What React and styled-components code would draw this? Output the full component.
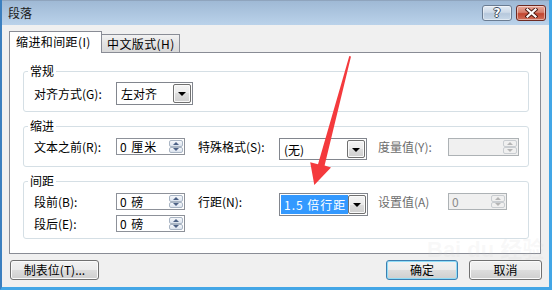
import React from 'react';
import styled, { createGlobalStyle } from 'styled-components';

const GlobalStyle = createGlobalStyle`
  body {
    margin: 0;
    font-family: "Noto Sans CJK SC", "Liberation Sans", sans-serif;
    font-size: 12px;
    color: #000;
  }
`;

const Window = styled.div`
  position: relative;
  width: 552px;
  height: 290px;
  box-sizing: border-box;
  background: #f0f0f0;
  border-left: 2px solid #3b7fbf;
  border-right: 3px solid #43a6e6;
  border-bottom: 3px solid #43a6e6;
  display: flex;
  flex-direction: column;
  overflow: hidden;
`;

const TitleBar = styled.div`
  height: 25px;
  box-sizing: border-box;
  border-top: 1px solid #8fa4bd;
  background: linear-gradient(#9fb9d5, #bad2ea);
  display: flex;
  align-items: flex-start;
  justify-content: space-between;
  padding: 0 3px 0 6px;
`;

const Title = styled.div`
  line-height: 24px;
  font-size: 12px;
  color: #1a1a1a;
`;

const CaptionButtons = styled.div`
  display: flex;
  gap: 4px;
  padding-top: 4px;
`;

const CaptionButton = styled.div`
  width: ${p => p.$w}px;
  height: 16px;
  box-sizing: border-box;
  border: 1px solid ${p => (p.$close ? '#6e2a22' : '#6a7c92')};
  border-radius: 3px;
  background: ${p =>
    p.$close
      ? 'linear-gradient(#e9a99b 0%, #d67f6c 45%, #c2452f 55%, #d0705b 100%)'
      : 'linear-gradient(#e4ecf5 0%, #cdd9e7 45%, #b6c8dc 55%, #c9d8e8 100%)'};
  box-shadow: inset 0 0 0 1px rgba(255, 255, 255, 0.45);
  display: flex;
  align-items: center;
  justify-content: center;
`;

const HelpGlyph = styled.span`
  font-family: "DejaVu Sans", sans-serif;
  font-weight: bold;
  font-size: 12px;
  line-height: 12px;
  color: #fff;
  text-shadow: -1px 0 #3d4b5c, 1px 0 #3d4b5c, 0 -1px #3d4b5c, 0 1px #3d4b5c;
`;

const Body = styled.div`
  flex: 1;
  display: flex;
  flex-direction: column;
  padding: 6px 8px 0 7px;
`;

const TabStrip = styled.div`
  display: flex;
  align-items: flex-end;
`;

const Tab = styled.div`
  position: relative;
  box-sizing: border-box;
  width: ${p => p.$w}px;
  height: ${p => (p.$active ? 22 : 18)}px;
  margin-bottom: ${p => (p.$active ? -1 : 0)}px;
  z-index: ${p => (p.$active ? 1 : 0)};
  border: 1px solid #898c95;
  border-bottom: none;
  border-left: ${p => (p.$active ? '1px solid #898c95' : 'none')};
  background: ${p => (p.$active ? '#fff' : 'linear-gradient(#f2f2f2, #e3e3e3 50%, #d9d9d9)')};
  padding-left: ${p => (p.$active ? 6 : 5)}px;
  line-height: ${p => (p.$active ? 20 : 17)}px;
  letter-spacing: 0.4px;
  white-space: nowrap;
`;

const Panel = styled.div`
  height: 202px;
  box-sizing: border-box;
  border: 1px solid #898c95;
  background: #fff;
  padding: 12px 11px 0 13px;
  display: flex;
  flex-direction: column;
  gap: 8px;
`;

const Group = styled.fieldset`
  margin: 0;
  padding: 0;
  min-width: 0;
  border: 1px solid #d5dfe5;
  border-radius: 3px;
`;

const GroupTitle = styled.legend`
  margin-left: 4px;
  padding: 0 2px;
  line-height: 12px;
  font-size: 12px;
`;

const GroupBody = styled.div`
  display: grid;
  grid-template-columns: 82px 82px 81px 99px 70px auto;
  grid-auto-rows: ${p => p.$rows || 'auto'};
  align-items: ${p => (p.$center ? 'center' : 'start')};
  padding: ${p => p.$pt}px 0 6px 10px;
`;

const Label = styled.div`
  line-height: 17px;
  white-space: nowrap;
  color: ${p => (p.$disabled ? '#6d6d6d' : '#000')};
`;

const SelectBox = styled.div`
  display: flex;
  box-sizing: border-box;
  width: ${p => p.$w}px;
  height: ${p => p.$h}px;
  border: 1px solid #82868e;
  background: #fff;
  padding: 1px;
`;

const SelectValue = styled.div`
  flex: 1;
  display: flex;
  align-items: center;
  padding-left: 3px;
  white-space: nowrap;
  letter-spacing: ${p => (p.$selected ? '1px' : '0')};
  background: ${p => (p.$selected ? '#3399ff' : 'transparent')};
  color: ${p => (p.$selected ? '#fff' : '#000')};
`;

const DropButton = styled.div`
  width: 18px;
  box-sizing: border-box;
  border: 1px solid #707070;
  border-radius: 2px;
  background: linear-gradient(#f4f4f4 0%, #ebebeb 50%, #dddddd 50%, #cfcfcf 100%);
  box-shadow: inset 0 0 0 1px #fafafa;
  display: flex;
  align-items: center;
  justify-content: center;

  &::after {
    content: '';
    border-left: 4px solid transparent;
    border-right: 4px solid transparent;
    border-top: 4px solid #000;
    margin-top: 1px;
  }
`;

const Spinner = styled.div`
  display: flex;
  box-sizing: border-box;
  width: ${p => p.$w}px;
  height: ${p => p.$h || 17}px;
  border: 1px solid ${p => (p.$disabled ? '#adb2b5' : '#8d9199')};
  background: ${p => (p.$disabled ? '#f0f0f0' : '#fff')};
  padding: 1px;
`;

const SpinValue = styled.div`
  flex: 1;
  display: flex;
  align-items: center;
  padding-left: 2px;
  letter-spacing: 1px;
  white-space: nowrap;
  color: ${p => (p.$disabled ? '#8a8a8a' : '#000')};
`;

const SpinButtons = styled.div`
  width: 14px;
  display: flex;
  flex-direction: column;
`;

const SpinButton = styled.div`
  flex: 1;
  box-sizing: border-box;
  border: 1px solid ${p => (p.$disabled ? '#c9cdd1' : '#a9b5c4')};
  border-radius: 2px;
  background: ${p => (p.$disabled ? '#f0f0f0' : 'linear-gradient(#f6f8fb, #dbe3ee)')};
  display: flex;
  align-items: center;
  justify-content: center;

  &::after {
    content: '';
    border-left: 3px solid transparent;
    border-right: 3px solid transparent;
    ${p => (p.$down ? 'border-top' : 'border-bottom')}: 3px solid ${p => (p.$disabled ? '#b5b5b5' : '#4c6185')};
  }
`;

const Footer = styled.div`
  display: flex;
  align-items: center;
  margin: 6px -1px 0 1px;
`;

const FooterSpacer = styled.div`
  flex: 1;
`;

const DialogButton = styled.button`
  width: ${p => p.$w}px;
  height: 20px;
  box-sizing: border-box;
  margin-left: ${p => p.$ml || 0}px;
  padding: 0;
  border: 1px solid ${p => (p.$primary ? '#3c7fb1' : '#707070')};
  border-radius: 3px;
  background: linear-gradient(#f2f2f2 0%, #ebebeb 50%, #dddddd 50%, #cfcfcf 100%);
  box-shadow: inset 0 0 0 1px ${p => (p.$primary ? '#8fdcf7' : '#fbfbfb')};
  font-family: inherit;
  font-size: 12px;
  line-height: 18px;
  color: #000;
`;

const Overlay = styled.svg`
  position: absolute;
  left: -2px;
  top: 0;
  pointer-events: none;
`;

const Watermark = styled.div`
  position: absolute;
  left: 425px;
  top: 238px;
  font-family: "Liberation Sans", "Noto Sans CJK SC", sans-serif;
  font-weight: bold;
  font-size: 22px;
  line-height: 24px;
  color: rgba(200, 200, 200, 0.12);
  pointer-events: none;
`;

const Spin = ({ w, h, value, disabled }) => (
  <Spinner $w={w} $h={h} $disabled={disabled}>
    <SpinValue $disabled={disabled}>{value}</SpinValue>
    <SpinButtons>
      <SpinButton $disabled={disabled} />
      <SpinButton $disabled={disabled} $down />
    </SpinButtons>
  </Spinner>
);

const Select = ({ w, h, value, selected }) => (
  <SelectBox $w={w} $h={h}>
    <SelectValue $selected={selected}>{value}</SelectValue>
    <DropButton />
  </SelectBox>
);

const App = () => (
  <Window>
    <GlobalStyle />
    <TitleBar>
      <Title>段落</Title>
      <CaptionButtons>
        <CaptionButton $w={30}>
          <HelpGlyph>?</HelpGlyph>
        </CaptionButton>
        <CaptionButton $w={30} $close>
          <svg width="13" height="10" viewBox="0 0 13 10">
            <path d="M2.5 1.5 L10.5 8.5 M10.5 1.5 L2.5 8.5" stroke="#4a1810" strokeWidth="4" strokeLinecap="square" />
            <path d="M2.5 1.5 L10.5 8.5 M10.5 1.5 L2.5 8.5" stroke="#fff" strokeWidth="2.2" strokeLinecap="square" />
          </svg>
        </CaptionButton>
      </CaptionButtons>
    </TitleBar>

    <Body>
      <TabStrip>
        <Tab $active $w={93}>缩进和间距(I)</Tab>
        <Tab $w={78}>中文版式(H)</Tab>
      </TabStrip>

      <Panel>
        <Group>
          <GroupTitle>常规</GroupTitle>
          <GroupBody $pt={5} $center>
            <Label>对齐方式(G):</Label>
            <Select w={77} h={23} value="左对齐" />
          </GroupBody>
        </Group>

        <Group>
          <GroupTitle>缩进</GroupTitle>
          <GroupBody $pt={6} $rows="22px">
            <Label>文本之前(R):</Label>
            <Spin w={69} value="0 厘米" />
            <Label>特殊格式(S):</Label>
            <Select w={88} h={22} value="(无)" />
            <Label $disabled>度量值(Y):</Label>
            <Spin w={71} h={18} value="" disabled />
          </GroupBody>
        </Group>

        <Group>
          <GroupTitle>间距</GroupTitle>
          <GroupBody $pt={6} $rows="22px 17px">
            <Label>段前(B):</Label>
            <Spin w={69} value="0 磅" />
            <Label>行距(N):</Label>
            <Select w={89} h={23} value="1.5 倍行距" selected />
            <Label $disabled>设置值(A)</Label>
            <Spin w={59} value="0" disabled />
            <Label>段后(E):</Label>
            <Spin w={69} value="0 磅" />
          </GroupBody>
        </Group>
      </Panel>

      <Footer>
        <DialogButton $w={89}>制表位(T)...</DialogButton>
        <FooterSpacer />
        <DialogButton $w={72} $primary>确定</DialogButton>
        <DialogButton $w={73} $ml={11}>取消</DialogButton>
      </Footer>
    </Body>

    <Watermark>Bai du 经验</Watermark>

    <Overlay width="552" height="290" viewBox="0 0 552 290">
      <polygon
        points="349.3,56 351,56.4 324.6,165.6 331,167.4 314.3,185 310.2,162.2 318,164.2"
        fill="#f43a3d"
      />
    </Overlay>
  </Window>
);

export default App;
